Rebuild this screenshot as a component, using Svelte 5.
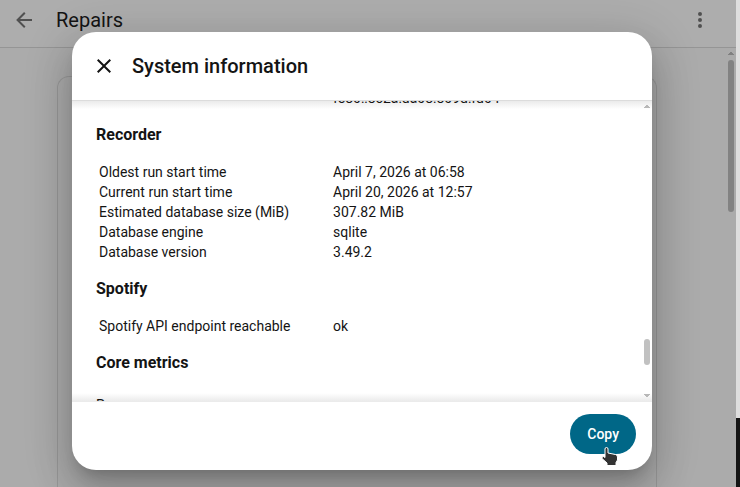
<script lang="ts">
	import { onMount } from 'svelte';

	const sections = [
		{
			title: '',
			rows: [['', 'fe80::8c2a:da08:809d:fd04']]
		},
		{
			title: 'Recorder',
			rows: [
				['Oldest run start time', 'April 7, 2026 at 06:58'],
				['Current run start time', 'April 20, 2026 at 12:57'],
				['Estimated database size (MiB)', '307.82 MiB'],
				['Database engine', 'sqlite'],
				['Database version', '3.49.2']
			]
		},
		{
			title: 'Spotify',
			rows: [['Spotify API endpoint reachable', 'ok']]
		}
	];

	let content: HTMLElement;

	onMount(() => {
		content.scrollTop = 13;
	});
</script>

<div class="window">
	<main class="page">
		<header class="toolbar">
			<button class="icon-button" aria-label="Back">
				<svg viewBox="0 0 24 24"><path d="M20,11V13H8L13.5,18.5L12.08,19.92L4.16,12L12.08,4.08L13.5,5.5L8,11H20Z" /></svg>
			</button>
			<h1>Repairs</h1>
			<button class="icon-button" aria-label="Menu">
				<svg viewBox="0 0 24 24"><path d="M12,16A2,2 0 0,1 14,18A2,2 0 0,1 12,20A2,2 0 0,1 10,18A2,2 0 0,1 12,16M12,10A2,2 0 0,1 14,12A2,2 0 0,1 12,14A2,2 0 0,1 10,12A2,2 0 0,1 12,10M12,4A2,2 0 0,1 14,6A2,2 0 0,1 12,8A2,2 0 0,1 10,6A2,2 0 0,1 12,4Z" /></svg>
			</button>
		</header>
		<div class="body">
			<div class="card"></div>
			<div class="page-scroll">
				<svg viewBox="0 0 6 3"><path d="M0,3V2H1V1H2V0H4V1H5V2H6V3Z" /></svg>
				<div class="page-thumb"></div>
			</div>
		</div>
	</main>
	<div class="edge"></div>

	<div class="scrim">
		<div class="dialog" role="dialog" aria-labelledby="dialog-title">
			<header class="dialog-header">
				<button class="icon-button" aria-label="Close">
					<svg viewBox="0 0 24 24"><path d="M19,6.41L17.59,5L12,10.59L6.41,5L5,6.41L10.59,12L5,17.59L6.41,19L12,13.41L17.59,19L19,17.59L13.41,12L19,6.41Z" /></svg>
				</button>
				<h2 id="dialog-title">System information</h2>
			</header>

			<div class="dialog-body">
				<div class="content" bind:this={content}>
					{#each sections as section}
						{#if section.title}
							<h3>{section.title}</h3>
						{/if}
						<table>
							<tbody>
								{#each section.rows as [label, value]}
									<tr>
										<td>{label}</td>
										<td>{value}</td>
									</tr>
								{/each}
							</tbody>
						</table>
					{/each}
					<h3>Core metrics</h3>
					<div class="metric">Processor usage</div>
				</div>
				<div class="scrollbar">
					<svg viewBox="0 0 6 3"><path d="M0,3V2H1V1H2V0H4V1H5V2H6V3Z" /></svg>
					<div class="track">
						<div class="thumb"></div>
					</div>
					<svg viewBox="0 0 6 3"><path d="M0,0V1H1V2H2V3H4V2H5V1H6V0Z" /></svg>
				</div>
			</div>

			<footer>
				<button class="copy">
					Copy
					<svg class="pointer" viewBox="0 0 18 19">
						<path d="M4,2Q4,0.5 5.5,0.5T7,2V6L14.5,7.5Q16.5,8 16.5,10V13L15,15.5V18.5H6V16L1,11.5Q0.5,9.5 2.5,9.5L4,10.5Z" />
					</svg>
				</button>
			</footer>
		</div>
	</div>
</div>

<style>
	:global(body) {
		margin: 0;
		font-family: Roboto, sans-serif;
		color: #141414;
	}

	h1,
	h2,
	h3 {
		margin: 0;
	}

	button {
		border: 0;
		padding: 0;
		background: none;
		color: inherit;
		font-family: inherit;
	}

	.window {
		position: relative;
		display: flex;
		height: 100vh;
		overflow: hidden;
	}

	.page {
		flex: 1;
		display: flex;
		flex-direction: column;
		background: #ababab;
	}

	.edge {
		width: 4px;
		background: linear-gradient(#dedede 0 418px, #141414 418px);
	}

	.toolbar {
		display: flex;
		align-items: center;
		height: 47px;
		padding: 0 24px 0 12px;
		border-bottom: 1px solid #959595;
		background: #adadad;
	}

	.toolbar .icon-button {
		margin-bottom: 7px;
		color: #505050;
	}

	.icon-button {
		display: flex;
	}

	.icon-button svg {
		width: 24px;
		height: 24px;
		fill: currentColor;
	}

	h1 {
		flex: 1;
		margin: 0 0 7px 20px;
		font-size: 20px;
		font-weight: 400;
		line-height: 24px;
	}

	.body {
		flex: 1;
		display: flex;
	}

	.card {
		flex: 1;
		margin: 28px 71px 0 57px;
		border: 1px solid #989898;
		border-bottom: 0;
		border-radius: 12px 12px 0 0;
	}

	.page-scroll {
		width: 6px;
		margin: 4px 2px 0 0;
	}

	.page-scroll svg,
	.scrollbar svg {
		display: block;
		width: 6px;
		height: 3px;
	}

	.page-scroll svg {
		fill: #808080;
	}

	.page-thumb {
		height: 152px;
		margin-top: 5px;
		border-radius: 3px;
		background: #828282;
	}

	.scrim {
		position: absolute;
		inset: 0 16px 0 0;
		display: flex;
		justify-content: center;
		align-items: flex-start;
		padding: 32px 16px 17px;
	}

	.dialog {
		display: flex;
		flex-direction: column;
		flex: 1;
		max-width: 580px;
		border-radius: 24px;
		background: #fff;
		box-shadow:
			0 11px 15px -7px rgba(0, 0, 0, 0.2),
			0 24px 38px 3px rgba(0, 0, 0, 0.14),
			0 9px 46px 8px rgba(0, 0, 0, 0.12);
	}

	.dialog-header {
		display: flex;
		align-items: center;
		gap: 16px;
		padding: 20px;
	}

	h2 {
		font-size: 20px;
		font-weight: 500;
		line-height: 28px;
	}

	.dialog-body {
		display: flex;
		height: 300px;
		border-top: 1px solid #dcdcdc;
		border-bottom: 1px solid #ebebeb;
		background: linear-gradient(#ebebeb, #fff 8px, #fff calc(100% - 8px), #ebebeb);
	}

	.content {
		flex: 1;
		overflow: hidden;
		padding: 0 14px 24px 24px;
		font-size: 14px;
		line-height: 20px;
	}

	h3 {
		font-size: 16px;
		font-weight: 700;
		line-height: 24px;
		padding: 15px 0;
	}

	table {
		width: 100%;
		border-collapse: collapse;
	}

	td {
		width: 44%;
		height: 20px;
		padding: 0 3px;
	}

	td + td {
		width: 56%;
	}

	.metric {
		padding-top: 5px;
	}

	.scrollbar {
		display: flex;
		flex-direction: column;
		width: 6px;
		padding: 4px 2px;
	}

	.scrollbar svg {
		fill: #b8b8b8;
	}

	.track {
		flex: 1;
	}

	.thumb {
		height: 26px;
		margin-top: 231px;
		border-radius: 3px;
		background: #c1c1c1;
	}

	footer {
		display: flex;
		justify-content: flex-end;
		padding: 12px 16px 16px;
	}

	.copy {
		position: relative;
		height: 40px;
		padding: 0 17px;
		border-radius: 20px;
		background: #006787;
		color: #fff;
		font-size: 14px;
		font-weight: 500;
		line-height: 20px;
	}

	.pointer {
		position: absolute;
		right: 17px;
		bottom: -12px;
		width: 18px;
		height: 19px;
		fill: #333;
		stroke: #fff;
	}
</style>
